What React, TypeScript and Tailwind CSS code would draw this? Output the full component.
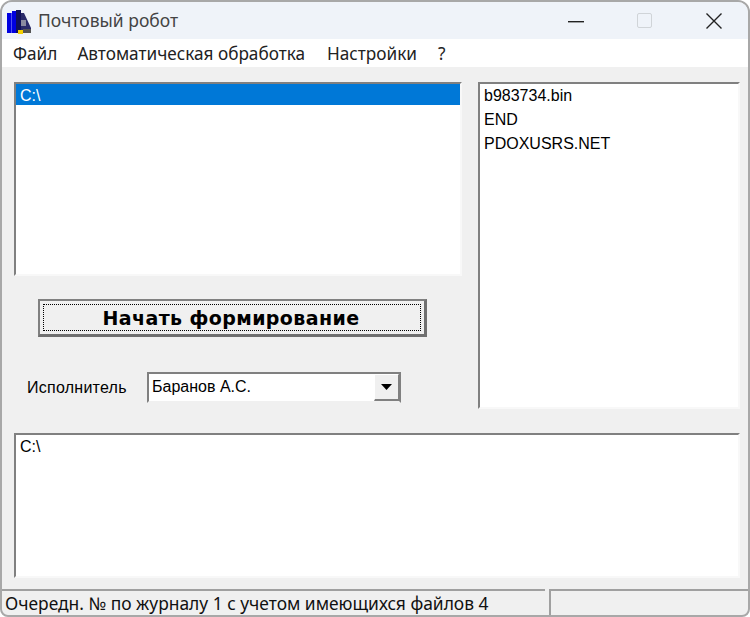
const listFont = "font-['Liberation_Sans',sans-serif] text-[16px] leading-[24px] text-black";

function AppIcon() {
  return (
    <svg width="26" height="26" viewBox="0 0 26 26" className="shrink-0">
      <rect x="1" y="5" width="4" height="20" fill="#0000e0" />
      <rect x="5" y="5" width="1" height="20" fill="#5050f0" />
      <rect x="6" y="3" width="4" height="22" fill="#0000e0" />
      <rect x="10" y="2" width="5" height="23" fill="#10105a" />
      <path d="M15 5 L18 5 L25 20 L25 25 L15 25 Z" fill="#2a2a6a" />
      <rect x="15" y="12" width="5" height="6" fill="#8a8aa0" />
      <rect x="12" y="22" width="5" height="4" fill="#f5d000" />
      <rect x="17" y="21" width="8" height="4" fill="#555" />
    </svg>
  );
}

function ListBox({ className, children }: { className: string; children: React.ReactNode }) {
  return (
    <div className={`bg-white border-2 border-t-[#808080] border-l-[#808080] border-r-[#f8f8f8] border-b-[#f8f8f8] ${className}`}>
      {children}
    </div>
  );
}

export default function App() {
  return (
    <div className="w-[750px] h-[617px] bg-white overflow-hidden">
      <div className="w-full h-full flex flex-col bg-[#f0f0f0] border-2 border-[#a8a8a8] rounded-t-[12px] rounded-b-[8px] overflow-hidden">
        {/* Title bar */}
        <div className="h-[37px] shrink-0 flex items-center bg-[#eff3f9] pl-[4px]">
          <AppIcon />
          <span className="ml-[6px] font-['Noto_Sans',sans-serif] text-[17.5px] text-[#444]">Почтовый робот</span>
          <div className="ml-auto flex items-center">
            <svg width="16" height="16" viewBox="0 0 16 16" className="mr-[53px]">
              <rect x="0" y="8" width="16" height="1.4" fill="#222" />
            </svg>
            <div className="w-[15px] h-[15px] border border-[#d0d4d8] rounded-[2px] mr-[53px]" />
            <svg width="18" height="18" viewBox="0 0 18 18" className="mr-[25px]">
              <path d="M1.5 1.5 L16.5 16.5 M16.5 1.5 L1.5 16.5" stroke="#222" strokeWidth="1.4" fill="none" />
            </svg>
          </div>
        </div>

        {/* Menu */}
        <div className="h-[28px] shrink-0 bg-white flex items-center gap-[20px] pl-[11px] pt-[1px] font-['Noto_Sans',sans-serif] text-[17.2px] text-[#222]">
          <span>Файл</span>
          <span>Автоматическая обработка</span>
          <span className="ml-[2px]">Настройки</span>
          <span className="ml-[1px]">?</span>
        </div>

        {/* Content */}
        <div className="flex-1 flex flex-col pl-[12px] pr-[8px] pt-[15px]">
          <div className="flex gap-[16px] h-[327px]">
            <div className="w-[448px] flex flex-col">
              <ListBox className="h-[194px] shrink-0">
                <div className={`${listFont} h-[21px] bg-[#0078d7] !text-white pl-[4px] !leading-[23px]`}>C:\</div>
              </ListBox>
              <button className="mt-[23px] ml-[24px] w-[389px] h-[38px] bg-[#f0f0f0] border-t-2 border-l-2 border-r-[3px] border-b-[3px] border-t-[#808080] border-l-[#808080] border-r-[#707070] border-b-[#707070] p-[3px]">
                <div className="h-full border border-dotted border-black flex items-center justify-center pt-[2px] pr-[2px] font-['DejaVu_Sans',sans-serif] font-bold text-[19px] tracking-[0.4px] text-black">
                  Начать формирование
                </div>
              </button>
              <div className="mt-[35px] flex items-center">
                <span className="ml-[13px] w-[120px] font-['Liberation_Sans',sans-serif] text-[16px] tracking-[0.25px] text-black">Исполнитель</span>
                <div className="w-[254px] h-[31px] flex bg-white border-2 border-t-[#808080] border-l-[#808080] border-r-[#808080] border-b-[#f0f0f0]">
                  <span className={`${listFont} flex-1 pl-[3px] !leading-[26px]`}>Баранов А.С.</span>
                  <div className="w-[25px] bg-[#f0f0f0] border-r border-b-2 border-b-[#808080] border-r-[#808080] border-t border-l border-t-white border-l-white flex items-center justify-center">
                    <svg width="11" height="6" viewBox="0 0 11 6">
                      <path d="M0 0 H11 L5.5 6 Z" fill="#000" />
                    </svg>
                  </div>
                </div>
              </div>
            </div>
            <ListBox className="w-[262px] pl-[4px]">
              <div className={listFont}>b983734.bin</div>
              <div className={listFont}>END</div>
              <div className={listFont}>PDOXUSRS.NET</div>
            </ListBox>
          </div>
          <ListBox className="mt-[24px] h-[145px] pl-[4px]">
            <div className={listFont}>C:\</div>
          </ListBox>
        </div>

        {/* Status bar */}
        <div className="h-[26px] shrink-0 flex gap-[4px]">
          <div className="w-[543px] pl-[3px] border-t-2 border-t-[#a0a0a0] font-['Noto_Sans',sans-serif] text-[17.4px] leading-[24px] text-[#111] whitespace-nowrap overflow-hidden">
            Очередн. № по журналу 1 с учетом имеющихся файлов 4
          </div>
          <div className="flex-1 border-t-2 border-l-2 border-t-[#a0a0a0] border-l-[#a0a0a0]" />
        </div>
      </div>
    </div>
  );
}
